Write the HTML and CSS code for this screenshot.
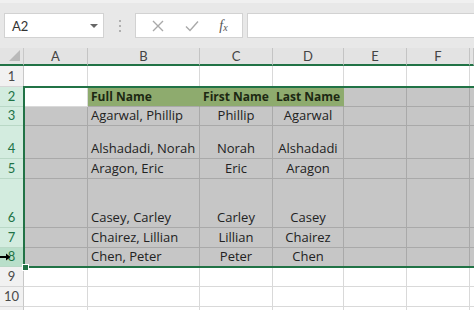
FILE: index.html
```html
<!DOCTYPE html>
<html>
<head>
<meta charset="utf-8">
<link rel="stylesheet" href="styles.css">
</head>
<body>
<div class="toolbar">
  <div class="namebox"><span class="ref">A2</span><span class="caret"></span></div>
  <div class="grip"><i></i><i></i><i></i></div>
  <div class="fbtns">
    <svg class="ico" width="12" height="12" viewBox="0 0 12 12"><path d="M1 1L11 11M11 1L1 11" stroke="#a9a9a9" stroke-width="1.4" fill="none"/></svg>
    <svg class="ico" width="14" height="12" viewBox="0 0 14 12"><path d="M1 6.5L5 10.5L13 1.5" stroke="#a9a9a9" stroke-width="1.4" fill="none"/></svg>
    <span class="fx">f<sub>x</sub></span>
  </div>
  <div class="finput"></div>
</div>
<div class="sheet">
  <div class="grid">
    <div class="corner"><span class="tri"></span></div>
    <div class="ch">A</div><div class="ch">B</div><div class="ch">C</div><div class="ch">D</div><div class="ch">E</div><div class="ch">F</div><div class="ch last"></div>

    <div class="rh">1</div>
    <div class="c"></div><div class="c"></div><div class="c"></div><div class="c"></div><div class="c"></div><div class="c"></div><div class="c"></div>

    <div class="rh sel">2</div>
    <div class="c active"></div><div class="c hd">Full Name</div><div class="c hd ctr">First Name</div><div class="c hd ctr">Last Name</div><div class="c s"></div><div class="c s"></div><div class="c s"></div>

    <div class="rh sel">3</div>
    <div class="c s"></div><div class="c s">Agarwal, Phillip</div><div class="c s ctr">Phillip</div><div class="c s ctr">Agarwal</div><div class="c s"></div><div class="c s"></div><div class="c s"></div>

    <div class="rh sel">4</div>
    <div class="c s"></div><div class="c s">Alshadadi, Norah</div><div class="c s ctr">Norah</div><div class="c s ctr">Alshadadi</div><div class="c s"></div><div class="c s"></div><div class="c s"></div>

    <div class="rh sel">5</div>
    <div class="c s"></div><div class="c s">Aragon, Eric</div><div class="c s ctr">Eric</div><div class="c s ctr">Aragon</div><div class="c s"></div><div class="c s"></div><div class="c s"></div>

    <div class="rh sel">6</div>
    <div class="c s"></div><div class="c s">Casey, Carley</div><div class="c s ctr">Carley</div><div class="c s ctr">Casey</div><div class="c s"></div><div class="c s"></div><div class="c s"></div>

    <div class="rh sel">7</div>
    <div class="c s"></div><div class="c s">Chairez, Lillian</div><div class="c s ctr">Lillian</div><div class="c s ctr">Chairez</div><div class="c s"></div><div class="c s"></div><div class="c s"></div>

    <div class="rh sel hover">8</div>
    <div class="c s"></div><div class="c s">Chen, Peter</div><div class="c s ctr">Peter</div><div class="c s ctr">Chen</div><div class="c s"></div><div class="c s"></div><div class="c s"></div>

    <div class="rh">9</div>
    <div class="c"></div><div class="c"></div><div class="c"></div><div class="c"></div><div class="c"></div><div class="c"></div><div class="c"></div>

    <div class="rh">10</div>
    <div class="c"></div><div class="c"></div><div class="c"></div><div class="c"></div><div class="c"></div><div class="c"></div><div class="c"></div>

    <div class="rh"></div>
    <div class="c"></div><div class="c"></div><div class="c"></div><div class="c"></div><div class="c"></div><div class="c"></div><div class="c"></div>
  </div>
  <div class="selection"></div>
  <div class="handle"></div>
  <svg class="cursor" width="12" height="10" viewBox="0 0 12 10"><path d="M0 5H7" stroke="#000" stroke-width="2"/><path d="M6 1.5L10.5 5L6 8.5Z" fill="#000"/></svg>
</div>
</body>
</html>
```

FILE: styles.css
```css
html, body {
  margin: 0;
  padding: 0;
  width: 474px;
  height: 310px;
  overflow: hidden;
  background: #ffffff;
  font-family: Lato, "Liberation Sans", sans-serif;
}

.toolbar {
  height: 48px;
  box-sizing: border-box;
  background: #e8e8e8;
  border-top: 3px solid #f0f0f0;
  display: flex;
  align-items: center;
  padding: 0 0 0 4px;
}

.namebox {
  width: 100px;
  height: 25px;
  box-sizing: border-box;
  background: #fff;
  border: 1px solid #d2d2d2;
  display: flex;
  align-items: center;
  justify-content: space-between;
  padding: 0 5px 0 7px;
}

.ref {
  font-size: 13px;
  color: #333;
}

.caret {
  width: 0;
  height: 0;
  border-left: 4px solid transparent;
  border-right: 4px solid transparent;
  border-top: 4px solid #666;
}

.grip {
  width: 31px;
  display: flex;
  flex-direction: column;
  align-items: center;
  gap: 3px;
}

.grip i {
  display: block;
  width: 2px;
  height: 2px;
  background: #b0b0b0;
}

.fbtns {
  width: 108px;
  height: 25px;
  box-sizing: border-box;
  background: #fff;
  border: 1px solid #d2d2d2;
  display: flex;
  align-items: center;
  justify-content: space-around;
  padding: 0 4px 0 6px;
}

.fx {
  font-family: "Liberation Serif", serif;
  font-style: italic;
  font-size: 14px;
  color: #555;
}

.fx sub {
  font-size: 10px;
  vertical-align: -1px;
}

.finput {
  flex: 1;
  height: 25px;
  margin-left: 4px;
  box-sizing: border-box;
  background: #fff;
  border: 1px solid #d2d2d2;
  border-right: none;
}

.sheet {
  position: relative;
  height: 262px;
  overflow: hidden;
}

.grid {
  display: grid;
  grid-template-columns: 24px 64px 112px 73px 71px 63px 63px 4px;
  grid-template-rows: 18px 21px 20px 19px 33px 20px 49px 20px 19px 20px 20px 20px;
}

.grid > div {
  box-sizing: border-box;
  border-right: 1px solid #d9d9d9;
  border-bottom: 1px solid #d9d9d9;
  font-family: "Open Sans", Lato, sans-serif;
  font-size: 13px;
  line-height: 17px;
  color: #222;
  white-space: nowrap;
  overflow: hidden;
}

.corner {
  background: #e3e3e3;
  position: relative;
  border-bottom: 2px solid #217346 !important;
  border-right: 1px solid #c8c8c8 !important;
}

.tri {
  position: absolute;
  right: 3px;
  bottom: 3px;
  width: 0;
  height: 0;
  border-left: 11px solid transparent;
  border-bottom: 11px solid #b9b9b9;
}

.ch {
  background: #e3e3e3;
  border-right: 1px solid #c4c4c4 !important;
  border-bottom: 2px solid #217346 !important;
  display: flex;
  align-items: center;
  justify-content: center;
  font-family: Lato, sans-serif !important;
  font-size: 13px !important;
  color: #444 !important;
}

.rh {
  background: #f1f1f1;
  border-right: 1px solid #c8c8c8 !important;
  border-bottom: 1px solid #d6d6d6 !important;
  display: flex;
  align-items: flex-end;
  justify-content: center;
  padding-bottom: 1px;
  font-family: Lato, sans-serif !important;
  font-size: 13px !important;
  color: #4a4a4a !important;
}

.rh.sel {
  background: #d3ecdf;
  color: #217346 !important;
  border-bottom: 1px solid #b9d8c6 !important;
}

.rh.hover {
  background: #b9dfca;
}

.c {
  display: flex;
  align-items: flex-end;
  padding: 0 3px 1px 3px;
  background: #fff;
}

.c.s {
  background: #c6c6c6;
  border-right-color: #a9a9a9;
  border-bottom-color: #a9a9a9;
}

.c.active {
  background: #fff;
}

.c.hd {
  background: #8eab6e;
  border-right-color: #8eab6e;
  border-bottom-color: #a9a9a9;
  font-weight: bold;
  font-size: 12px;
  color: #1c2812;
}

.c.ctr {
  justify-content: center;
}

.selection {
  position: absolute;
  left: 23px;
  top: 38px;
  width: 460px;
  height: 182px;
  box-sizing: border-box;
  border: 2px solid #217346;
}

.handle {
  position: absolute;
  left: 22px;
  top: 216px;
  width: 5px;
  height: 5px;
  background: #217346;
  border: 1px solid #fff;
}

.cursor {
  position: absolute;
  left: 0;
  top: 204px;
}
```
